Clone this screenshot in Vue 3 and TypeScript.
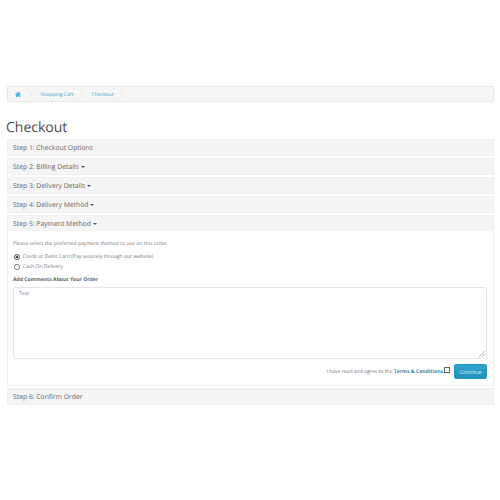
<script setup lang="ts">
const crumbs = ['Shopping Cart', 'Checkout']
</script>

<template>
  <div class="page">
    <ul class="breadcrumb">
      <li class="crumb home">
        <svg width="6" height="5" viewBox="0 0 14 12"><path d="M7 0 L10 2.6 V1 H12 V4.3 L14 6 L13 7 L7 2 L1 7 L0 6 Z M2.5 7 L7 3.2 L11.5 7 V12 H8.5 V8.5 H5.5 V12 H2.5 Z" fill="#23a1d1" /></svg>
      </li>
      <li v-for="c in crumbs" :key="c" class="crumb">{{ c }}</li>
    </ul>
    <h1>Checkout</h1>
    <div class="panel"><div class="head">Step 1: Checkout Options</div></div>
    <div class="panel"><div class="head">Step 2: Billing Details <i class="caret"></i></div></div>
    <div class="panel"><div class="head">Step 3: Delivery Details <i class="caret"></i></div></div>
    <div class="panel"><div class="head">Step 4: Delivery Method <i class="caret"></i></div></div>
    <div class="panel">
      <div class="head">Step 5: Payment Method <i class="caret"></i></div>
      <div class="body">
        <p class="intro">Please select the preferred payment method to use on this order.</p>
        <label class="radio"><input type="radio" name="pay" checked /> Credit or Debit Card (Pay securely through our website)</label>
        <label class="radio"><input type="radio" name="pay" /> Cash On Delivery</label>
        <p class="comments">Add Comments About Your Order</p>
        <div class="textarea">Test
          <svg class="grip" width="6" height="6" viewBox="0 0 6 6"><path d="M0 6 L6 0 M3 6 L6 3" stroke="#aaa" stroke-width="0.8" /></svg>
        </div>
        <div class="actions">
          <span class="agree">I have read and agree to the <a>Terms &amp; Conditions</a></span>
          <span class="check"></span>
          <button type="button">Continue</button>
        </div>
      </div>
    </div>
    <div class="panel"><div class="head">Step 6: Confirm Order</div></div>
  </div>
</template>

<style>
html, body { background: #fff; }
</style>

<style scoped>
.page {
  padding: 86px 6px 0 7px;
  font-family: "Open Sans", sans-serif;
  text-rendering: geometricPrecision;
  color: #666;
  box-sizing: border-box;
  width: 500px;
  height: 500px;
  overflow: hidden;
}
.breadcrumb {
  display: flex;
  align-items: center;
  list-style: none;
  margin: 0;
  padding: 0;
  height: 16px;
  background: #f6f6f6;
  border: 1px solid #e8e8e8;
  box-sizing: border-box;
  border-radius: 1px;
  overflow: hidden;
}
.crumb {
  position: relative;
  padding: 0 10.5px 0 7.5px;
  font-size: 5px;
  color: #3aa6cf;
  line-height: 16px;
  height: 14px;
}
.crumb.home {
  display: flex;
  align-items: center;
  padding: 0 12px 0 7px;
}
.crumb::after {
  content: "";
  position: absolute;
  right: 2.3px;
  top: 1.5px;
  width: 11px;
  height: 11px;
  box-sizing: border-box;
  border-top: 1px solid #ececec;
  border-right: 1px solid #ececec;
  transform: rotate(45deg);
}
h1 {
  margin: 17px 0 2px -1px;
  font-size: 14px;
  line-height: 18px;
  font-weight: 400;
  color: #4c4c4c;
}
.panel {
  margin-bottom: 2px;
  border: 1px solid #f0f0f0;
}
.head {
  height: 15px;
  line-height: 16px;
  padding-left: 5px;
  font-size: 6.8px;
  background: #f5f5f5;
  color: #666;
}
.caret {
  display: inline-block;
  width: 0;
  height: 0;
  vertical-align: middle;
  border-top: 2px solid #555;
  border-left: 2px solid transparent;
  border-right: 2px solid transparent;
}
.body {
  padding: 10px 6px 0 5px;
  height: 154px;
  box-sizing: border-box;
}
.intro {
  margin: 0 0 4px;
  font-size: 5.1px;
  line-height: 7px;
  color: #777;
}
.radio {
  display: flex;
  align-items: center;
  gap: 3px;
  font-size: 5.1px;
  line-height: 10px;
  color: #777;
}
.radio input {
  appearance: none;
  margin: 0 0 0 1px;
  width: 5.5px;
  height: 5.5px;
  border: 0.6px solid #777;
  border-radius: 50%;
  background: #fff;
  box-sizing: border-box;
}
.radio input:checked {
  background: #444;
  box-shadow: inset 0 0 0 0.7px #fff;
}
.comments {
  margin: 4.5px 0 3.5px;
  font-size: 5.1px;
  line-height: 7px;
  font-weight: 700;
  color: #666;
}
.textarea {
  position: relative;
  height: 72px;
  border: 1px solid #e6e6e6;
  border-radius: 2px;
  box-sizing: border-box;
  padding: 2px 5px;
  font-size: 5.1px;
  line-height: 9px;
  color: #777;
}
.grip { position: absolute; right: 1px; bottom: 1px; }
.actions {
  display: flex;
  align-items: center;
  justify-content: flex-end;
  margin-top: 5px;
  font-size: 5.05px;
  color: #777;
}
.agree a { color: #3a87ad; font-weight: 700; }
.check {
  width: 6px;
  height: 6px;
  border: 0.7px solid #666;
  margin: -3px 4px 0 1px;
  box-sizing: border-box;
}
button {
  width: 33px;
  height: 15px;
  padding: 0;
  border: 1px solid #2394bf;
  border-radius: 2px;
  background: linear-gradient(#2ca5d1, #2092bd);
  color: #dff1f8;
  font: 5.1px "Open Sans", sans-serif;
}
</style>
